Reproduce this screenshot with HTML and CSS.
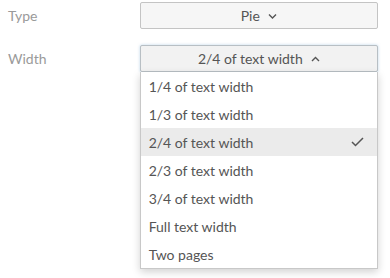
FILE: index.html
```html
<!DOCTYPE html>
<html lang="en">
<head>
  <meta charset="UTF-8" />
  <title>Chart options</title>
  <link rel="stylesheet" href="styles.css">
</head>
<body>
  <div class="form">
    <div class="row">
      <span class="label">Type</span>
      <div class="field">
        <button class="select">Pie
          <svg class="chev" width="9" height="6" viewBox="0 0 9 6"><path d="M1 1.5 L4.5 5 L8 1.5" fill="none" stroke="#555" stroke-width="1.4"/></svg>
        </button>
      </div>
    </div>
    <div class="row">
      <span class="label">Width</span>
      <div class="field">
        <button class="select open">2/4 of text width
          <svg class="chev" width="9" height="6" viewBox="0 0 9 6"><path d="M1 5 L4.5 1.5 L8 5" fill="none" stroke="#555" stroke-width="1.4"/></svg>
        </button>
        <ul class="menu">
          <li>1/4 of text width</li>
          <li>1/3 of text width</li>
          <li class="selected">2/4 of text width
            <svg class="check" width="13" height="10" viewBox="0 0 13 10"><path d="M1 5 L4.5 8.5 L12 1" fill="none" stroke="#555" stroke-width="1.5"/></svg>
          </li>
          <li>2/3 of text width</li>
          <li>3/4 of text width</li>
          <li>Full text width</li>
          <li>Two pages</li>
        </ul>
      </div>
    </div>
  </div>
</body>
</html>
```

FILE: styles.css
```css
body { margin: 0; background: #fff; font-family: Lato, "Open Sans", sans-serif; font-size: 14px; color: #555; }
.form { padding: 2px 12px 0 8px; }
.row { display: flex; align-items: flex-start; margin-bottom: 16px; }
.label { width: 132px; color: #9a9a9a; line-height: 27px; }
.field { position: relative; width: 239px; }
.select { display: flex; align-items: center; justify-content: center; gap: 8px; width: 100%; height: 27px; padding: 0; border: 1px solid #c4c4c4; border-radius: 2px; background: #f6f6f6; font: inherit; color: #555; }
.select.open { background: #f2f2f2; border-color: #b8bfc4; box-shadow: 0 0 3px rgba(120,170,210,0.5); }
.chev { margin-top: 1px; }
.menu { list-style: none; margin: 0; padding: 0; border: 1px solid #c8c8c8; border-top: none; background: #fff; box-shadow: 0 3px 8px rgba(0,0,0,0.18); }
.menu li { display: flex; align-items: center; justify-content: space-between; height: 28px; padding: 0 13px 0 8px; }
.menu li.selected { background: #ebebeb; }
```
